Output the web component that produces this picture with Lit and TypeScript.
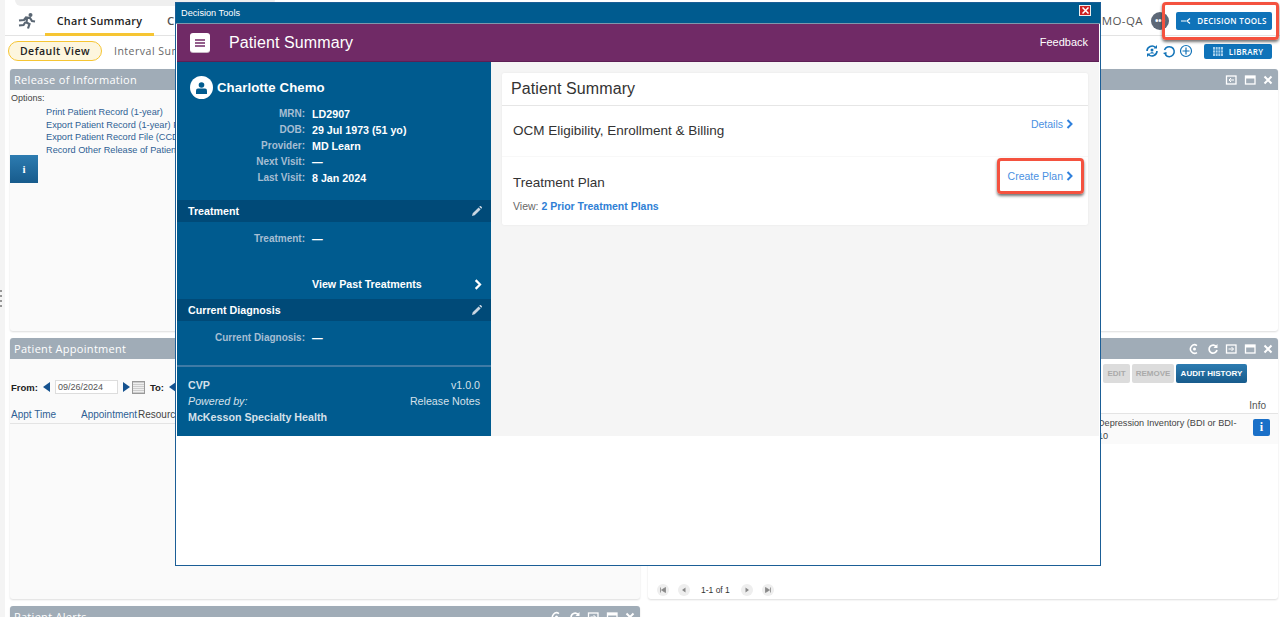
import { LitElement, html, css, svg } from 'lit';
import { customElement } from 'lit/decorators.js';

const chevron = (size = 10) => html`<svg class="chev" width=${size * 0.7} height=${size} viewBox="0 0 7 10"><path d="M1.5 1 5.5 5 1.5 9" fill="none" stroke="currentColor" stroke-width="2"/></svg>`;
const pencil = html`<svg width="10" height="10" viewBox="0 0 10 10"><path d="M0 10 .7 7.3 6.6 1.4 8.6 3.4 2.7 9.3ZM7.2.8 8 0q.4-.2.7 0L10 1.3q.2.3 0 .7L9.2 2.8Z" fill="#c9d6e2"/></svg>`;

const winIcons = {
  history: svg`<path d="M9 2.5A4.2 4.2 0 1 0 9 9.5" fill="none" stroke="#fff" stroke-width="1.5"/><circle cx="6.5" cy="6" r="1.5" fill="#fff"/>`,
  refresh: svg`<path d="M9.5 4A4 4 0 1 0 10 7" fill="none" stroke="#fff" stroke-width="1.7"/><path d="M10.5 1V5H6.5Z" fill="#fff"/>`,
  dock: svg`<rect x="1.5" y="2" width="9.5" height="8" fill="none" stroke="#fff" stroke-width="1.3"/><path d="M3.5 6H8.5M6.5 4 8.5 6 6.5 8" fill="none" stroke="#fff"/>`,
  dockLeft: svg`<rect x="1.5" y="2" width="9.5" height="8" fill="none" stroke="#fff" stroke-width="1.3"/><path d="M9 6H4M6 4 4 6 6 8" fill="none" stroke="#fff"/>`,
  max: svg`<rect x="1.5" y="2" width="9.5" height="8" fill="none" stroke="#fff" stroke-width="1.3"/><rect x="1.5" y="2" width="9.5" height="2.5" fill="#fff"/>`,
  close: svg`<path d="M2.5 2.5 9.5 9.5M9.5 2.5 2.5 9.5" stroke="#fff" stroke-width="2"/>`,
};
const winIcon = (name: keyof typeof winIcons) => html`<svg width="12" height="12" viewBox="0 0 12 12">${winIcons[name]}</svg>`;

const pagerIcons = {
  first: svg`<path d="M2.5 2.5V7.5M7.5 2.5V7.5L3.5 5Z" fill="#888" stroke="#888" stroke-width=".8"/>`,
  prev: svg`<path d="M6.5 2.5V7.5L3 5Z" fill="#888"/>`,
  next: svg`<path d="M3.5 2.5V7.5L7 5Z" fill="#888"/>`,
  last: svg`<path d="M7.5 2.5V7.5M2.5 2.5V7.5L6.5 5Z" fill="#888" stroke="#888" stroke-width=".8"/>`,
};
const pagerBtn = (name: keyof typeof pagerIcons) => html`<span class="pg"><svg width="10" height="10" viewBox="0 0 10 10">${pagerIcons[name]}</svg></span>`;

@customElement('app-root')
export class AppRoot extends LitElement {
  static styles = css`
    :host {
      display: block;
      position: relative;
      width: 1280px;
      height: 617px;
      overflow: hidden;
      background: #f4f4f4;
      font-family: "Liberation Sans", Arial, sans-serif;
      color: #333;
    }

    .page { display: flex; flex-direction: column; height: 617px; margin-left: 5px; background: #fff; }
    .search { height: 6px; margin-left: 10px; width: 260px; background: #efefef; border-radius: 0 0 8px 8px; flex: none; }

    .nav { display: flex; align-items: stretch; height: 29px; border-bottom: 1px solid #e3e3e3; flex: none; font-family: "Open Sans", sans-serif; }
    .logo { width: 36px; padding-left: 4px; display: flex; align-items: center; justify-content: center; }
    .tab { display: flex; align-items: center; justify-content: center; width: 109px; font-size: 10.8px; font-weight: 600; letter-spacing: .3px; color: #222; border-bottom: 3px solid #f6c533; box-sizing: border-box; padding-top: 2px; height: 30px; }
    .tab2 { margin-left: 13px; font-size: 11.5px; font-weight: 600; color: #555; align-self: center; }
    .nav-right { margin-left: auto; display: flex; align-items: center; padding-right: 8px; }
    .env { font-size: 11.5px; letter-spacing: .4px; color: #555; margin-right: 8px; }
    .more { width: 18px; height: 18px; border-radius: 50%; background: #5d6877; color: #fff; display: flex; align-items: center; justify-content: center; font-size: 9px; font-weight: 700; letter-spacing: 0; margin-right: 7px; }
    .btn { display: flex; align-items: center; justify-content: center; gap: 6px; background: #0f73b9; color: #fff; border-radius: 2px; font-family: "Open Sans", sans-serif; font-weight: 600; font-size: 8px; letter-spacing: .3px; }
    .btn.decision { width: 96px; height: 18px; }
    .btn.library { width: 68px; height: 15px; }

    .sub { height: 33px; box-sizing: border-box; padding: 0 0 3px 3px; display: flex; align-items: center; flex: none; font-family: "Open Sans", sans-serif; font-size: 10.5px; letter-spacing: .5px; }
    .pill { width: 94px; height: 20px; box-sizing: border-box; border: 1px solid #f6c533; border-radius: 10px; background: #fdf6de; color: #222; display: flex; align-items: center; justify-content: center; font-weight: 600; }
    .sub-link { margin-left: 12px; color: #666; }
    .sub-right { margin-left: auto; display: flex; align-items: center; gap: 3px; padding-right: 8px; }
    .sub-right .btn { margin-left: 8px; }

    .panels { display: grid; grid-template-columns: 630px 630px; grid-template-rows: 262px 261px 40px; gap: 7px 8px; padding-left: 5px; }
    .panel { background: #fafafa; border-radius: 3px; box-shadow: 0 1px 2px #ddd; overflow: hidden; display: flex; flex-direction: column; position: relative; }
    .panel.plain { background: #fff; }
    .bar { height: 21px; flex: none; background: #a0acb7; color: #fff; display: flex; align-items: center; padding: 0 4px; font-family: "Open Sans", sans-serif; font-size: 11px; letter-spacing: .3px; }
    .bar .tools { margin-left: auto; display: flex; gap: 6.5px; align-items: center; }

    .options { font-size: 9px; color: #444; padding: 3px 0 0 1px; }
    .links { display: flex; flex-direction: column; padding: 3px 0 0 36px; margin-bottom: -1px; font-size: 9.2px; line-height: 12.5px; color: #2f5f94; white-space: nowrap; }
    .info-big { width: 28px; height: 28px; background: linear-gradient(#2d7cb1, #175b8c); color: #fff; font-family: "Liberation Serif", serif; font-weight: 700; font-size: 11px; display: flex; align-items: center; justify-content: center; }

    .dates { display: flex; align-items: center; height: 24px; margin-top: 16px; padding-left: 1px; font-size: 9.5px; font-weight: 700; color: #222; gap: 5px; }
    .tri-l { width: 0; height: 0; border: 5px solid transparent; border-right: 7px solid #15528f; border-left: 0; }
    .tri-r { width: 0; height: 0; border: 5px solid transparent; border-left: 7px solid #15528f; border-right: 0; }
    .date { width: 63px; height: 14px; box-sizing: border-box; border: 1px solid #ddd; background: #fff; font-weight: 400; color: #555; font-size: 9px; padding: 1px 2px; }
    .cal { width: 11px; height: 11px; border: 1px solid #999; background: repeating-linear-gradient(#ccc 0 1px, #eee 1px 2px); margin-left: -3px; }
    .cols { display: flex; font-size: 10px; color: #2f5f94; padding: 10px 0 3px 1px; border-bottom: 1px solid #e4e4e4; white-space: nowrap; }
    .cols span:nth-child(1) { width: 70px; }
    .cols span:nth-child(2) { width: 57px; overflow: hidden; }
    .cols span:nth-child(3) { color: #444; }

    .actions { display: flex; justify-content: flex-end; gap: 2px; height: 20px; margin-top: 5px; padding-right: 31px; }
    .act { height: 19px; display: flex; align-items: center; justify-content: center; background: #dcdcdc; color: #aaa; font-size: 8px; font-weight: 700; border-radius: 2px; }
    .act.edit { width: 27px; }
    .act.remove { width: 42px; }
    .act.audit { width: 71px; background: linear-gradient(#2d7cb1, #175b8c); color: #fff; }
    .info-col { display: flex; justify-content: flex-end; padding: 16px 12px 2px 0; font-size: 10px; line-height: 11px; color: #555; border-bottom: 1px solid #e4e4e4; background: #fff; }
    .row { display: flex; background: #fafafa; height: 27px; padding: 3px 8px 0 450px; font-size: 9.15px; line-height: 12.5px; color: #444; }
    .row .txt { width: 145px; flex: none; }
    .row .i { width: 17px; height: 17px; margin-top: 2px; background: #1a70c8; color: #fff; border-radius: 2px; font-family: "Liberation Serif", serif; font-weight: 700; font-size: 12px; display: flex; align-items: center; justify-content: center; margin-left: auto; }
    .pager { margin-top: auto; display: flex; align-items: center; gap: 9px; padding-left: 9px; height: 18px; flex: none; font-size: 8.5px; color: #333; }
    .pg { width: 12px; height: 12px; border-radius: 50%; background: #eee; display: flex; align-items: center; justify-content: center; }
    .pager .count { margin: 0 2px; }

    .grip { position: absolute; left: 0; top: 290px; width: 3px; display: flex; flex-direction: column; gap: 3px; }
    .grip i { width: 2px; height: 2px; background: #777; border-radius: 50%; }

    /* decision tools window floats over the chart */
    .modal { position: absolute; left: 175px; top: 2px; width: 926px; height: 564px; box-sizing: border-box; border: 1px solid #1b5e96; background: #fff; display: flex; flex-direction: column; }
    .titlebar { height: 20px; background: #005b8f; color: #fff; font-size: 9.2px; display: flex; align-items: center; padding: 0 9px 0 5px; flex: none; justify-content: space-between; border-bottom: 1px solid #7f97ad; }
    .x { width: 12px; height: 11px; align-self: flex-start; margin-top: 2px; background: #c22; border: 1px solid #eee; display: flex; align-items: center; justify-content: center; box-sizing: border-box; }
    .frame { margin: 0 0 0 1px; width: 922px; display: flex; flex-direction: column; flex: none; height: 412px; }
    .head { height: 38px; flex: none; background: #702a66; border-bottom: 1px solid #5d1f55; box-sizing: border-box; color: #fff; display: flex; align-items: center; padding: 0 11px 0 13px; }
    .menu { width: 20px; height: 19px; background: #fff; border-radius: 3px; box-shadow: 0 1px 0 #c9b9c7; display: flex; align-items: center; justify-content: center; margin-right: 19px; }
    .head h1 { margin: 0; font-size: 16px; font-weight: 400; letter-spacing: .1px; }
    .feedback { margin-left: auto; font-size: 11px; padding-bottom: 1px; }
    .split { display: flex; flex: 1; }
    .side { width: 314px; flex: none; background: #005b8f; color: #fff; display: flex; flex-direction: column; font-size: 10.7px; font-weight: 700; }
    .person { display: flex; align-items: center; gap: 4px; padding: 14px 0 0 13px; font-size: 13.2px; letter-spacing: .1px; }
    .avatar { width: 23px; height: 23px; border-radius: 50%; background: #fff; display: flex; align-items: center; justify-content: center; }
    .kv { display: grid; grid-template-columns: 128px 1fr; column-gap: 7px; padding-top: 7px; line-height: 16px; }
    .kv .k { color: #a6bed3; text-align: right; font-size: 10px; }
    .section { height: 22px; background: #004a78; display: flex; align-items: center; justify-content: space-between; padding: 0 9px 0 11px; flex: none; }
    .section.top { margin-top: 14px; }
    .kv.one { padding-top: 9px; }
    .kv.treat { padding-top: 9px; height: 38px; }
    .past { height: 30px; display: flex; align-items: center; justify-content: space-between; padding: 0 9px 0 135px; color: #fff; flex: none; }
    .foot { margin-top: auto; border-top: 2px solid #3f7ba6; height: 71px; box-sizing: border-box; padding: 10px 11px 0; display: grid; grid-template-columns: 1fr auto; align-content: start; line-height: 16px; color: #d5e0ea; }
    .foot em { font-weight: 400; font-style: italic; }
    .foot .r { text-align: right; font-weight: 400; }
    .foot .w { grid-column: 1 / 3; }

    .content { flex: 1; background: #f5f5f5; padding: 11px 11px 0; }
    .card { background: #fff; box-shadow: 0 0 2px #e4e4e4; border-radius: 2px; height: 152px; color: #333; }
    .card h2 { margin: 0; height: 32px; display: flex; align-items: center; padding: 0 9px; font-size: 16px; font-weight: 400; color: #333; border-bottom: 1px solid #e6e6e6; letter-spacing: .1px; }
    .item { display: flex; justify-content: space-between; padding: 0 15px 0 11px; font-size: 13.5px; }
    .item.first { height: 33px; padding-top: 17px; border-bottom: 1px solid #f8f8f8; }
    .item.plan { height: 20px; padding-top: 18px; }
    .item .go { font-size: 10.5px; color: #4a90e2; display: flex; align-items: center; gap: 3px; height: 12px; margin-top: -5px; }
    .go .chev { color: #2f80dc; }
    .view { padding: 5px 11px; font-size: 10.5px; color: #666; }
    .view b { color: #2f7fd5; }

    /* red callouts */
    .callout { position: absolute; border: 3px solid #f4523f; border-radius: 4px; box-shadow: 0 2px 3px rgba(0, 0, 0, .55); box-sizing: border-box; }
    .callout.a { left: 1162px; top: 2px; width: 117px; height: 38px; }
    .callout.b { left: 997px; top: 158px; width: 87px; height: 36px; }
  `;

  render() {
    return html`
      <div class="page">
        <div class="search"></div>
        <div class="nav">
          <div class="logo">
            <svg width="18" height="16" viewBox="0 0 18 16"><circle cx="12.5" cy="2" r="2" fill="#5a6673"/><path d="M1 7.5 6 7 8 4.5 12 5 14 8 17 8.5M9 5 8.5 9.5 11.5 11 10 15.5M7.5 9 5.5 12 1 12.5" fill="none" stroke="#5a6673" stroke-width="2.2"/></svg>
          </div>
          <div class="tab">Chart Summary</div>
          <div class="tab2">C</div>
          <div class="nav-right">
            <span class="env">MO-QA</span>
            <span class="more">•••</span>
            <div class="btn decision">
              <svg width="10" height="8" viewBox="0 0 10 8"><path d="M0 4H5M9 1.5 6 4 9 6.5" fill="none" stroke="#fff" stroke-width="1.2"/></svg>
              DECISION TOOLS
            </div>
          </div>
        </div>
        <div class="sub">
          <div class="pill">Default View</div>
          <span class="sub-link">Interval Summary</span>
          <div class="sub-right">
            <svg width="14" height="14" viewBox="0 0 14 14"><path d="M2 7A5 5 0 0 1 10.5 3.5M12 7A5 5 0 0 1 3.5 10.5" fill="none" stroke="#1273b8" stroke-width="1.6"/><path d="M8.5 4.5H12V1ZM5.5 9.5H2V13Z" fill="#1273b8"/><circle cx="7" cy="6" r="1.5" fill="#1273b8"/><path d="M4.5 9.5Q7 6.5 9.5 9.5" fill="#1273b8"/></svg>
            <svg width="14" height="14" viewBox="0 0 14 14"><path d="M3.5 11A5 5 0 1 0 2.5 6" fill="none" stroke="#1273b8" stroke-width="1.5"/><path d="M1 9 4.5 8 4.5 12Z" fill="#1273b8"/></svg>
            <svg width="14" height="14" viewBox="0 0 14 14"><circle cx="7" cy="7" r="5.5" fill="none" stroke="#1273b8" stroke-width="1.2"/><path d="M7 3.5V10.5M3.5 7H10.5" stroke="#1273b8" stroke-width="1.2"/></svg>
            <div class="btn library">
              <svg width="10" height="9" viewBox="0 0 10 9"><path d="M0 0H10V9H0Z" fill="#a7d0ec"/><path d="M2.5 0V9M5 0V9M7.5 0V9M0 3H10M0 6H10" stroke="#0f73b9" stroke-width=".7"/></svg>
              LIBRARY
            </div>
          </div>
        </div>

        <div class="panels">
          <div class="panel">
            <div class="bar">Release of Information</div>
            <div class="options">Options:</div>
            <div class="links">
              <span>Print Patient Record (1-year)</span>
              <span>Export Patient Record (1-year) PDF</span>
              <span>Export Patient Record File (CCD)</span>
              <span>Record Other Release of Patient Record</span>
            </div>
            <div class="info-big">i</div>
          </div>
          <div class="panel plain">
            <div class="bar"><span class="tools">${winIcon('dockLeft')}${winIcon('max')}${winIcon('close')}</span></div>
          </div>

          <div class="panel">
            <div class="bar">Patient Appointment</div>
            <div class="dates">
              From: <span class="tri-l"></span><span class="date">09/26/2024</span><span class="tri-r"></span><span class="cal"></span> To: <span class="tri-l"></span>
            </div>
            <div class="cols"><span>Appt Time</span><span>Appointment</span><span>Resource</span></div>
          </div>
          <div class="panel plain">
            <div class="bar"><span class="tools">${winIcon('history')}${winIcon('refresh')}${winIcon('dock')}${winIcon('max')}${winIcon('close')}</span></div>
            <div class="actions">
              <div class="act edit">EDIT</div>
              <div class="act remove">REMOVE</div>
              <div class="act audit">AUDIT HISTORY</div>
            </div>
            <div class="info-col">Info</div>
            <div class="row">
              <span class="txt">Depression Inventory (BDI or BDI-10</span>
              <span class="i">i</span>
            </div>
            <div class="pager">
              ${pagerBtn('first')}${pagerBtn('prev')}<span class="count">1-1 of 1</span>${pagerBtn('next')}${pagerBtn('last')}
            </div>
          </div>

          <div class="panel">
            <div class="bar">Patient Alerts<span class="tools">${winIcon('history')}${winIcon('refresh')}${winIcon('dock')}${winIcon('max')}${winIcon('close')}</span></div>
          </div>
        </div>
      </div>

      <div class="grip"><i></i><i></i><i></i><i></i></div>

      <div class="modal">
        <div class="titlebar">
          <span>Decision Tools</span>
          <span class="x"><svg width="7" height="7" viewBox="0 0 7 7"><path d="M.5.5 6.5 6.5M6.5.5 .5 6.5" stroke="#fff" stroke-width="1.5"/></svg></span>
        </div>
        <div class="frame">
          <div class="head">
            <span class="menu"><svg width="10" height="8" viewBox="0 0 10 8"><path d="M0 1H10M0 4H10M0 7H10" stroke="#702a66" stroke-width="1.4"/></svg></span>
            <h1>Patient Summary</h1>
            <span class="feedback">Feedback</span>
          </div>
          <div class="split">
            <div class="side">
              <div class="person">
                <span class="avatar"><svg width="11" height="12" viewBox="0 0 11 12"><circle cx="5.5" cy="3" r="2.8" fill="#005b8f"/><path d="M0 12V8.5Q0 6.5 2 6.5H9Q11 6.5 11 8.5V12Z" fill="#005b8f"/></svg></span>
                Charlotte Chemo
              </div>
              <div class="kv">
                <span class="k">MRN:</span><span>LD2907</span>
                <span class="k">DOB:</span><span>29 Jul 1973 (51 yo)</span>
                <span class="k">Provider:</span><span>MD Learn</span>
                <span class="k">Next Visit:</span><span>—</span>
                <span class="k">Last Visit:</span><span>8 Jan 2024</span>
              </div>
              <div class="section top"><span>Treatment</span>${pencil}</div>
              <div class="kv treat"><span class="k">Treatment:</span><span>—</span></div>
              <div class="past"><span>View Past Treatments</span>${chevron(11)}</div>
              <div class="section"><span>Current Diagnosis</span>${pencil}</div>
              <div class="kv one"><span class="k">Current Diagnosis:</span><span>—</span></div>
              <div class="foot">
                <span>CVP</span><span class="r">v1.0.0</span>
                <em>Powered by:</em><span class="r">Release Notes</span>
                <span class="w">McKesson Specialty Health</span>
              </div>
            </div>
            <div class="content">
              <div class="card">
                <h2>Patient Summary</h2>
                <div class="item first"><span>OCM Eligibility, Enrollment &amp; Billing</span><span class="go">Details ${chevron()}</span></div>
                <div class="item plan"><span>Treatment Plan</span><span class="go">Create Plan ${chevron()}</span></div>
                <div class="view">View: <b>2 Prior Treatment Plans</b></div>
              </div>
            </div>
          </div>
        </div>
      </div>

      <div class="callout a"></div>
      <div class="callout b"></div>
    `;
  }
}

declare global {
  interface HTMLElementTagNameMap { 'app-root': AppRoot; }
}
